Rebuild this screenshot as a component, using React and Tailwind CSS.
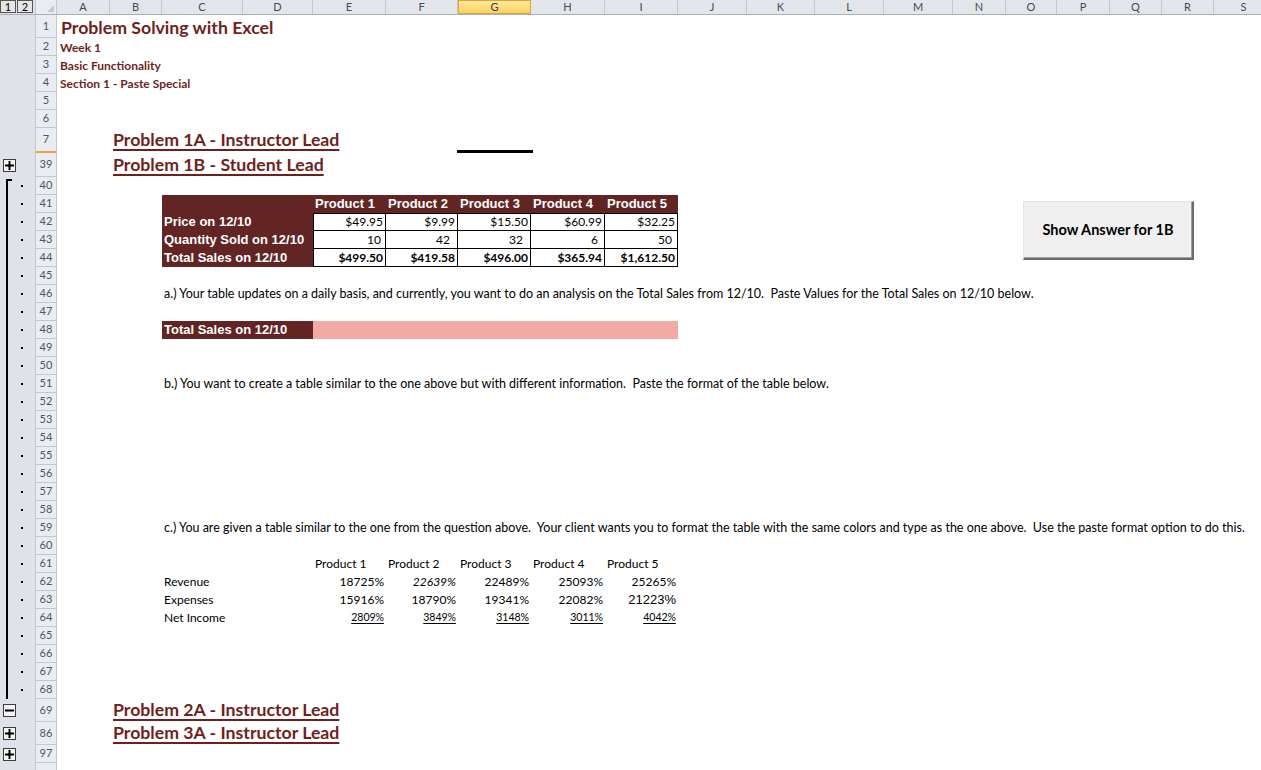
import React from 'react';

const COLS = [
  { l: 'A', w: 'w-[53px]' },
  { l: 'B', w: 'w-[52px]' },
  { l: 'C', w: 'w-[81px]' },
  { l: 'D', w: 'w-[70px]' },
  { l: 'E', w: 'w-[73px]' },
  { l: 'F', w: 'w-[72px]' },
  { l: 'G', w: 'w-[73px]', active: true },
  { l: 'H', w: 'w-[74px]' },
  { l: 'I', w: 'w-[73px]' },
  { l: 'J', w: 'w-[69px]' },
  { l: 'K', w: 'w-[68px]' },
  { l: 'L', w: 'w-[69px]' },
  { l: 'M', w: 'w-[69px]' },
  { l: 'N', w: 'w-[53px]' },
  { l: 'O', w: 'w-[51px]' },
  { l: 'P', w: 'w-[53px]' },
  { l: 'Q', w: 'w-[52px]' },
  { l: 'R', w: 'w-[52px]' },
  { l: 'S', w: 'w-[60px]' },
];

// widths of E..I, the product columns
const VW = ['w-[73px]', 'w-[72px]', 'w-[73px]', 'w-[74px]', 'w-[73px]'];
const PRODUCTS = ['Product 1', 'Product 2', 'Product 3', 'Product 4', 'Product 5'];

const arial = "font-['Liberation_Sans',Arial,sans-serif]";

function OutlineBox({ minus }) {
  return (
    <div className="ml-[3px] w-[13px] h-[13px] border border-[#3c3c3c] bg-[#f4f4f4] flex items-center justify-center">
      <svg width="9" height="9" viewBox="0 0 9 9">
        <rect x="0" y="3.5" width="9" height="2" fill="#000" />
        {!minus && <rect x="3.5" y="0" width="2" height="9" fill="#000" />}
      </svg>
    </div>
  );
}

function Bracket({ first }) {
  if (first) {
    return (
      <div className="flex h-full w-full">
        <div className="ml-[6px] mt-[2px] w-[6px] border-l-2 border-t-2 border-black" />
        <div className="ml-[9px] self-center w-[2px] h-[2px] bg-black" />
      </div>
    );
  }
  return (
    <div className="flex h-full w-full">
      <div className="ml-[6px] w-[2px] h-full bg-black" />
      <div className="ml-[13px] self-center w-[2px] h-[2px] bg-black" />
    </div>
  );
}

function Row({ n, h, gutter, mark, children }) {
  return (
    <div className={`flex ${h}`}>
      <div className="w-[35px] shrink-0 h-full bg-[#dfe3e9] flex items-center">{gutter}</div>
      <div
        className={`w-[22px] shrink-0 h-full bg-[#e9ecf0] border-l border-r border-b border-[#c3c8cf] flex items-center justify-center text-[11px] text-[#4a566a] ${
          mark ? 'border-b-2 border-b-[#eea33d]' : ''
        }`}
      >
        {n}
      </div>
      <div className="flex-1 h-full flex items-center overflow-hidden whitespace-nowrap">{children}</div>
    </div>
  );
}

function Heading({ children }) {
  return (
    <div className="pl-[56px] font-bold text-[17.7px] text-[#701f1c] underline decoration-2 underline-offset-[3px]">
      {children}
    </div>
  );
}

function DataRow({ label, values, bold, top, padRight }) {
  return (
    <>
      <div className="w-[105px] shrink-0" />
      <div className={`w-[151px] shrink-0 h-full bg-[#632523] text-white font-bold text-[13px] ${arial} flex items-center pl-[2px]`}>
        {label}
      </div>
      {values.map((v, i) => (
        <div
          key={i}
          className={`${VW[i]} shrink-0 h-full border-r border-b border-black ${i === 0 ? 'border-l' : ''} ${
            top ? 'border-t' : ''
          } flex items-center justify-end ${padRight ? padRight[i] : 'pr-[2px]'} text-[12px] text-black ${bold ? 'font-bold' : ''}`}
        >
          {v}
        </div>
      ))}
    </>
  );
}

function TextRow({ children }) {
  return <div className="pl-[107px] text-[12.5px] text-black">{children}</div>;
}

function PlainRow({ label, cells }) {
  return (
    <>
      <div className="w-[105px] shrink-0" />
      <div className="w-[151px] shrink-0 pl-[2px] text-[12px] text-black">{label}</div>
      {cells.map((c, i) => (
        <div key={i} className={`${VW[i]} shrink-0 h-full flex items-center justify-end pr-[2px] text-black`}>
          {c}
        </div>
      ))}
    </>
  );
}

// rows 40..68 sit inside the expanded outline group
const GROUP_ROWS = Array.from({ length: 29 }, (_, i) => 40 + i);

function rowContent(n) {
  switch (n) {
    case 41:
      return (
        <>
          <div className="w-[105px] shrink-0" />
          <div className="w-[151px] shrink-0 h-full bg-[#632523]" />
          {PRODUCTS.map((p, i) => (
            <div key={p} className={`${VW[i]} shrink-0 h-full bg-[#632523] text-white font-bold text-[13px] ${arial} flex items-center pl-[2px]`}>
              {p}
            </div>
          ))}
        </>
      );
    case 42:
      return <DataRow label="Price on 12/10" values={['$49.95', '$9.99', '$15.50', '$60.99', '$32.25']} top />;
    case 43:
      return (
        <DataRow
          label="Quantity Sold on 12/10"
          values={['10', '42', '32', '6', '50']}
          padRight={['pr-[4px]', 'pr-[7px]', 'pr-[7px]', 'pr-[6px]', 'pr-[5px]']}
        />
      );
    case 44:
      return <DataRow label="Total Sales on 12/10" values={['$499.50', '$419.58', '$496.00', '$365.94', '$1,612.50']} bold />;
    case 46:
      return (
        <TextRow>
          a.) Your table updates on a daily basis, and currently, you want to do an analysis on the Total Sales from 12/10.&nbsp; Paste
          Values for the Total Sales on 12/10 below.
        </TextRow>
      );
    case 48:
      return (
        <>
          <div className="w-[105px] shrink-0" />
          <div className={`w-[151px] shrink-0 h-full bg-[#632523] text-white font-bold text-[13px] ${arial} flex items-center pl-[2px]`}>
            Total Sales on 12/10
          </div>
          <div className="w-[365px] shrink-0 h-full bg-[#f1aaa5]" />
        </>
      );
    case 51:
      return (
        <TextRow>
          b.) You want to create a table similar to the one above but with different information.&nbsp; Paste the format of the table below.
        </TextRow>
      );
    case 59:
      return (
        <TextRow>
          c.) You are given a table similar to the one from the question above.&nbsp; Your client wants you to format the table with the
          same colors and type as the one above.&nbsp; Use the paste format option to do this.
        </TextRow>
      );
    case 61:
      return (
        <>
          <div className="w-[256px] shrink-0" />
          {PRODUCTS.map((p, i) => (
            <div key={p} className={`${VW[i]} shrink-0 pl-[2px] text-[12px] text-black`}>
              {p}
            </div>
          ))}
        </>
      );
    case 62:
      return (
        <PlainRow
          label="Revenue"
          cells={[
            <span className="text-[12px]">18725%</span>,
            <span className="text-[12px] italic">22639%</span>,
            <span className="text-[12px]">22489%</span>,
            <span className="text-[12px]">25093%</span>,
            <span className="text-[12px]">25265%</span>,
          ]}
        />
      );
    case 63:
      return (
        <PlainRow
          label="Expenses"
          cells={[
            <span className="text-[12px]">15916%</span>,
            <span className="text-[12px]">18790%</span>,
            <span className="text-[12px]">19341%</span>,
            <span className="text-[12px]">22082%</span>,
            <span className={`text-[13px] ${arial}`}>21223%</span>,
          ]}
        />
      );
    case 64:
      return (
        <PlainRow
          label="Net Income"
          cells={['2809%', '3849%', '3148%', '3011%', '4042%'].map((v) => (
            <span key={v} className="text-[10.5px] underline underline-offset-2">
              {v}
            </span>
          ))}
        />
      );
    default:
      return null;
  }
}

export default function App() {
  return (
    <div className="relative w-[1261px] h-[770px] overflow-hidden bg-white font-['Lato',sans-serif]">
      {/* column headers */}
      <div className="flex h-[15px] border-b border-[#a6afba] bg-[#e2e6eb]">
        <div className="w-[35px] shrink-0 h-full flex items-start gap-[1px] bg-[#dfe3e9]">
          <div className="w-[16px] h-[13px] border border-[#555] bg-[#e6e6e6] flex items-center justify-center text-[11px] leading-none text-black">
            1
          </div>
          <div className="w-[16px] h-[13px] border border-[#555] bg-[#e6e6e6] flex items-center justify-center text-[11px] leading-none text-black">
            2
          </div>
        </div>
        <div className="w-[22px] shrink-0 h-full border-l border-r border-[#c3c8cf] bg-[#e9ecf0] flex items-end justify-end pr-[2px] pb-[2px]">
          <svg width="7" height="7" viewBox="0 0 7 7">
            <polygon points="7,0 7,7 0,7" fill="#c3c8cf" />
          </svg>
        </div>
        {COLS.map((c) => (
          <div
            key={c.l}
            className={`${c.w} shrink-0 h-full flex items-center justify-center text-[11px] ${
              c.active
                ? 'bg-gradient-to-b from-[#fde99c] to-[#f8d35f] border border-[#e0a23a] text-[#3a3a3a]'
                : 'border-r border-[#c3c8cf] text-[#3f4a5b]'
            }`}
          >
            {c.l}
          </div>
        ))}
      </div>

      <Row n="1" h="h-[23px]">
        <div className="pl-[4px] pt-[3px] font-bold text-[17.7px] text-[#701f1c]">Problem Solving with Excel</div>
      </Row>
      <Row n="2" h="h-[18px]">
        <div className="pl-[3px] pt-[1px] font-bold text-[12px] text-[#701f1c]">Week 1</div>
      </Row>
      <Row n="3" h="h-[18px]">
        <div className="pl-[3px] pt-[1px] font-bold text-[12px] text-[#701f1c]">Basic Functionality</div>
      </Row>
      <Row n="4" h="h-[18px]">
        <div className="pl-[3px] pt-[1px] font-bold text-[12px] text-[#701f1c]">Section 1 - Paste Special</div>
      </Row>
      <Row n="5" h="h-[18px]" />
      <Row n="6" h="h-[18px]" />
      <Row n="7" h="h-[25px]" mark>
        <Heading>Problem 1A - Instructor Lead</Heading>
      </Row>
      <Row n="39" h="h-[24px]" gutter={<OutlineBox />}>
        <Heading>Problem 1B - Student Lead</Heading>
      </Row>

      {GROUP_ROWS.map((n) => (
        <Row key={n} n={n} h="h-[18px]" gutter={<Bracket first={n === 40} />}>
          {rowContent(n)}
        </Row>
      ))}

      <Row n="69" h="h-[23px]" gutter={<OutlineBox minus />}>
        <Heading>Problem 2A - Instructor Lead</Heading>
      </Row>
      <Row n="86" h="h-[23px]" gutter={<OutlineBox />}>
        <Heading>Problem 3A - Instructor Lead</Heading>
      </Row>
      <Row n="97" h="h-[18px]" gutter={<OutlineBox />} />
      <Row n="" h="h-[18px]" />

      {/* drawn line object over column G */}
      <div className="absolute left-[457px] top-[150px] w-[76px] h-[3px] bg-black" />

      {/* form button */}
      <button className="absolute left-[1023px] top-[201px] w-[171px] h-[59px] bg-[#f0f0f0] border-t border-l border-[#e3e3e3] border-r-2 border-b-2 border-r-[#6b6b6b] border-b-[#6b6b6b] shadow-[inset_-1px_-1px_0_#a0a0a0] flex items-center justify-center font-bold text-[14.5px] text-black">
        Show Answer for 1B
      </button>
    </div>
  );
}
